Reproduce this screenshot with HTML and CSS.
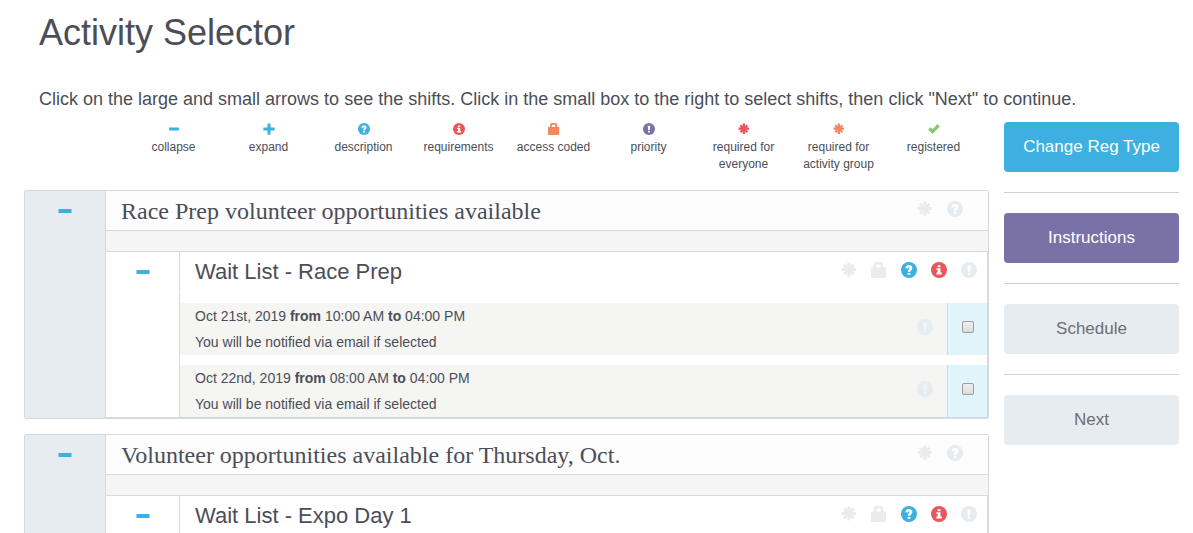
FILE: index.html
```html
<!DOCTYPE html>
<html lang="en">
<head>
  <meta charset="UTF-8">
  <meta name="viewport" content="width=device-width, initial-scale=1">
  <title>Activity Selector</title>
  <link rel="stylesheet" href="styles.css">
</head>
<body>

<!-- icon set -->
<svg class="sprite" aria-hidden="true">
  <symbol id="minus" viewBox="0 0 16 16"><rect x="1.5" y="6" width="13" height="4"/></symbol>
  <symbol id="plus" viewBox="0 0 16 16"><path d="M6 .5h4V6h5.5v4H10v5.5H6V10H.5V6H6z"/></symbol>
  <symbol id="question" viewBox="0 0 16 16">
    <circle cx="8" cy="8" r="8"/>
    <path class="cut-line" d="M5.6 6.4C5.8 3.7 10.1 3.7 10.1 6C10.1 7.6 8.1 7.6 8 9.8"/>
    <rect class="cut" x="6.6" y="10.9" width="2.8" height="1.9"/>
  </symbol>
  <symbol id="info" viewBox="0 0 16 16">
    <circle cx="8" cy="8" r="8"/>
    <path class="cut" d="M6.7 3.2h2.8v2H6.7zM5.4 6.2h4.1v4.4h1.3v1.9H5.4v-1.9h1.3V8.1H5.4z"/>
  </symbol>
  <symbol id="exclaim" viewBox="0 0 16 16">
    <circle cx="8" cy="8" r="8"/>
    <path class="cut" d="M6.2 3.5h3.6L9 9.8H7zM6.8 10.8h2.4v1.9H6.8z"/>
  </symbol>
  <symbol id="lock" viewBox="0 0 16 16">
    <path d="M0 5.4h2.8V2.4Q2.8 0 5.2 0h4.6q2.4 0 2.4 2.4v3H15V15q0 1-1 1H1q-1 0-1-1zM5.4 5.4h4.2V3.2q0-.8-.8-.8H6.2q-.8 0-.8.8z"/>
  </symbol>
  <symbol id="asterisk" viewBox="0 0 16 16">
    <path class="line" d="M.8 7.6h14M7.8.6v14M3.1 2.9l9.4 9.4M12.5 2.9l-9.4 9.4"/>
  </symbol>
  <symbol id="check" viewBox="0 0 16 16"><path d="M.2 8.8l3.2-3.2L6 8.3 12.6 1.4l3.2 3.2L6 14.8z"/></symbol>
</svg>

<div class="page">
  <h1>Activity Selector</h1>
  <p class="intro">Click on the large and small arrows to see the shifts. Click in the small box to the right to select shifts, then click "Next" to continue.</p>

  <div class="columns">
    <main>
      <ul class="legend">
        <li><svg class="icon blue"><use href="#minus"/></svg>collapse</li>
        <li><svg class="icon blue"><use href="#plus"/></svg>expand</li>
        <li><svg class="icon blue"><use href="#question"/></svg>description</li>
        <li><svg class="icon red"><use href="#info"/></svg>requirements</li>
        <li><svg class="icon orange"><use href="#lock"/></svg>access coded</li>
        <li><svg class="icon purple"><use href="#exclaim"/></svg>priority</li>
        <li><svg class="icon red"><use href="#asterisk"/></svg>required for everyone</li>
        <li><svg class="icon orange"><use href="#asterisk"/></svg>required for activity group</li>
        <li><svg class="icon green"><use href="#check"/></svg>registered</li>
      </ul>

      <section class="group">
        <button type="button" class="toggle group-toggle" aria-label="collapse"><svg class="icon blue"><use href="#minus"/></svg></button>
        <div class="group-content">
          <header class="group-header">
            <h2>Race Prep volunteer opportunities available</h2>
            <div class="icons">
              <svg class="icon off"><use href="#asterisk"/></svg>
              <svg class="icon off"><use href="#question"/></svg>
            </div>
          </header>
          <div class="activity">
            <button type="button" class="toggle" aria-label="collapse"><svg class="icon blue"><use href="#minus"/></svg></button>
            <div class="activity-content">
              <header class="activity-header">
                <h3>Wait List - Race Prep</h3>
                <div class="icons">
                  <svg class="icon off"><use href="#asterisk"/></svg>
                  <svg class="icon off"><use href="#lock"/></svg>
                  <svg class="icon blue"><use href="#question"/></svg>
                  <svg class="icon red"><use href="#info"/></svg>
                  <svg class="icon off"><use href="#exclaim"/></svg>
                </div>
              </header>
              <div class="shifts">
                <div class="shift">
                  <label for="shift-1">Oct 21st, 2019 <b>from</b> 10:00 AM <b>to</b> 04:00 PM<br>You will be notified via email if selected</label>
                  <svg class="icon off"><use href="#exclaim"/></svg>
                  <div class="pick"><input type="checkbox" id="shift-1"></div>
                </div>
                <div class="shift">
                  <label for="shift-2">Oct 22nd, 2019 <b>from</b> 08:00 AM <b>to</b> 04:00 PM<br>You will be notified via email if selected</label>
                  <svg class="icon off"><use href="#exclaim"/></svg>
                  <div class="pick"><input type="checkbox" id="shift-2"></div>
                </div>
              </div>
            </div>
          </div>
        </div>
      </section>

      <section class="group">
        <button type="button" class="toggle group-toggle" aria-label="collapse"><svg class="icon blue"><use href="#minus"/></svg></button>
        <div class="group-content">
          <header class="group-header">
            <h2>Volunteer opportunities available for Thursday, Oct.</h2>
            <div class="icons">
              <svg class="icon off"><use href="#asterisk"/></svg>
              <svg class="icon off"><use href="#question"/></svg>
            </div>
          </header>
          <div class="activity">
            <button type="button" class="toggle" aria-label="collapse"><svg class="icon blue"><use href="#minus"/></svg></button>
            <div class="activity-content">
              <header class="activity-header">
                <h3>Wait List - Expo Day 1</h3>
                <div class="icons">
                  <svg class="icon off"><use href="#asterisk"/></svg>
                  <svg class="icon off"><use href="#lock"/></svg>
                  <svg class="icon blue"><use href="#question"/></svg>
                  <svg class="icon red"><use href="#info"/></svg>
                  <svg class="icon off"><use href="#exclaim"/></svg>
                </div>
              </header>
            </div>
          </div>
        </div>
      </section>
    </main>

    <aside class="sidebar">
      <button type="button" class="btn btn-primary">Change Reg Type</button>
      <hr>
      <button type="button" class="btn btn-info">Instructions</button>
      <hr>
      <button type="button" class="btn">Schedule</button>
      <hr>
      <button type="button" class="btn">Next</button>
    </aside>
  </div>
</div>

</body>
</html>
```
FILE: styles.css
```css
* { box-sizing: border-box; }
body { margin: 0; background: #fff; color: #4b4e57; font-family: Arial, "Liberation Sans", sans-serif; font-size: 14px; }
h1, h2, h3, p, ul { margin: 0; padding: 0; font-weight: normal; }
button { font-family: inherit; cursor: pointer; }

.page { padding: 13px 14px 0 24px; }
h1 { padding-left: 15px; font-size: 36px; line-height: 40px; }
.intro { margin: 33px 0 10px; padding-left: 15px; font-size: 18px; line-height: 26px; }
.columns { display: grid; grid-template-columns: 1fr 175px; gap: 15px; align-items: start; }

/* icons */
.sprite { position: absolute; width: 0; height: 0; }
.icon { --cut: #fff; display: block; flex: none; width: 16px; height: 16px; fill: currentColor; }
.line { stroke: currentColor; stroke-width: 3; }
.cut { fill: var(--cut); }
.cut-line { fill: none; stroke: var(--cut); stroke-width: 2.6; }
.icons { display: flex; gap: 14px; padding-top: 10px; }
.blue { color: #3dafe0; }
.red { color: #e9565b; }
.orange { color: #f0885c; }
.purple { color: #7a72a6; }
.green { color: #8dc572; }
.off { color: #e7ecf0; }

/* legend */
.legend { display: grid; grid-template-columns: repeat(9, 1fr); margin-bottom: 17px; padding: 1px 8px 0 102px; list-style: none; font-size: 12px; line-height: 17px; text-align: center; }
.legend li { padding: 0 8px; }
.legend .icon { width: 12px; height: 12px; margin: 0 auto 4px; }

/* groups */
.group { display: grid; grid-template-columns: 81px 1fr; margin-bottom: 15px; border: 1px solid #d5dae2; border-radius: 2px; }
.group-content { background: #f5f5f3; }
.group-header { display: flex; justify-content: space-between; height: 40px; padding: 0 25px 0 15px; border-bottom: 1px solid #d5dae2; background: #fdfdfd; }
.group-header h2 { font-family: "Times New Roman", "Liberation Serif", serif; font-size: 24px; line-height: 40px; }
.toggle { display: flex; justify-content: center; align-items: flex-start; padding: 12px 0 0; border: 0; background: #fff; }
.group-toggle { border-right: 1px solid #d5dae2; background: #e7ecf0; }

/* activities inside a group */
.activity { display: grid; grid-template-columns: 73px 1fr; margin-top: 20px; border: 1px solid #d5dae2; border-left: 0; }
.activity-content { background: #fff; }
.activity-header { display: flex; justify-content: space-between; height: 40px; margin-bottom: 1px; padding: 0 10px 0 15px; border-left: 1px solid #d5dae2; }
.activity-header h3 { font-size: 22px; line-height: 40px; }

/* shifts */
.shifts { display: grid; gap: 10px; padding-top: 10px; border-left: 1px solid #d5dae2; }
.shift { display: flex; align-items: center; padding-left: 15px; background: #f5f5f3; }
.shift label { flex: 1; line-height: 26px; }
.shift .icon { --cut: #f5f5f3; margin: 0 14px 4px 0; }
.pick { display: flex; align-items: center; justify-content: center; align-self: stretch; width: 40px; padding-bottom: 4px; border-left: 1px solid #d5dae2; background: #e1f3fb; }
.pick input { appearance: none; width: 12px; height: 12px; margin: 0; border: 1px solid #9c9c9c; border-radius: 2px; background: linear-gradient(#f0f0f0, #dcdcdc); }
.pick input:checked { background: #3dafe0; }

/* sidebar */
.btn { display: block; width: 100%; padding: 13px 0; border: 0; border-radius: 4px; background: #e7ecf0; color: #6b6f76; font-size: 17px; line-height: 24px; }
.btn-primary { background: #3dafe0; color: #fff; }
.btn-info { background: #7a72a6; color: #fff; }
.sidebar hr { margin: 20px 0; border: 0; border-top: 1px solid #cfcfcf; }
```
